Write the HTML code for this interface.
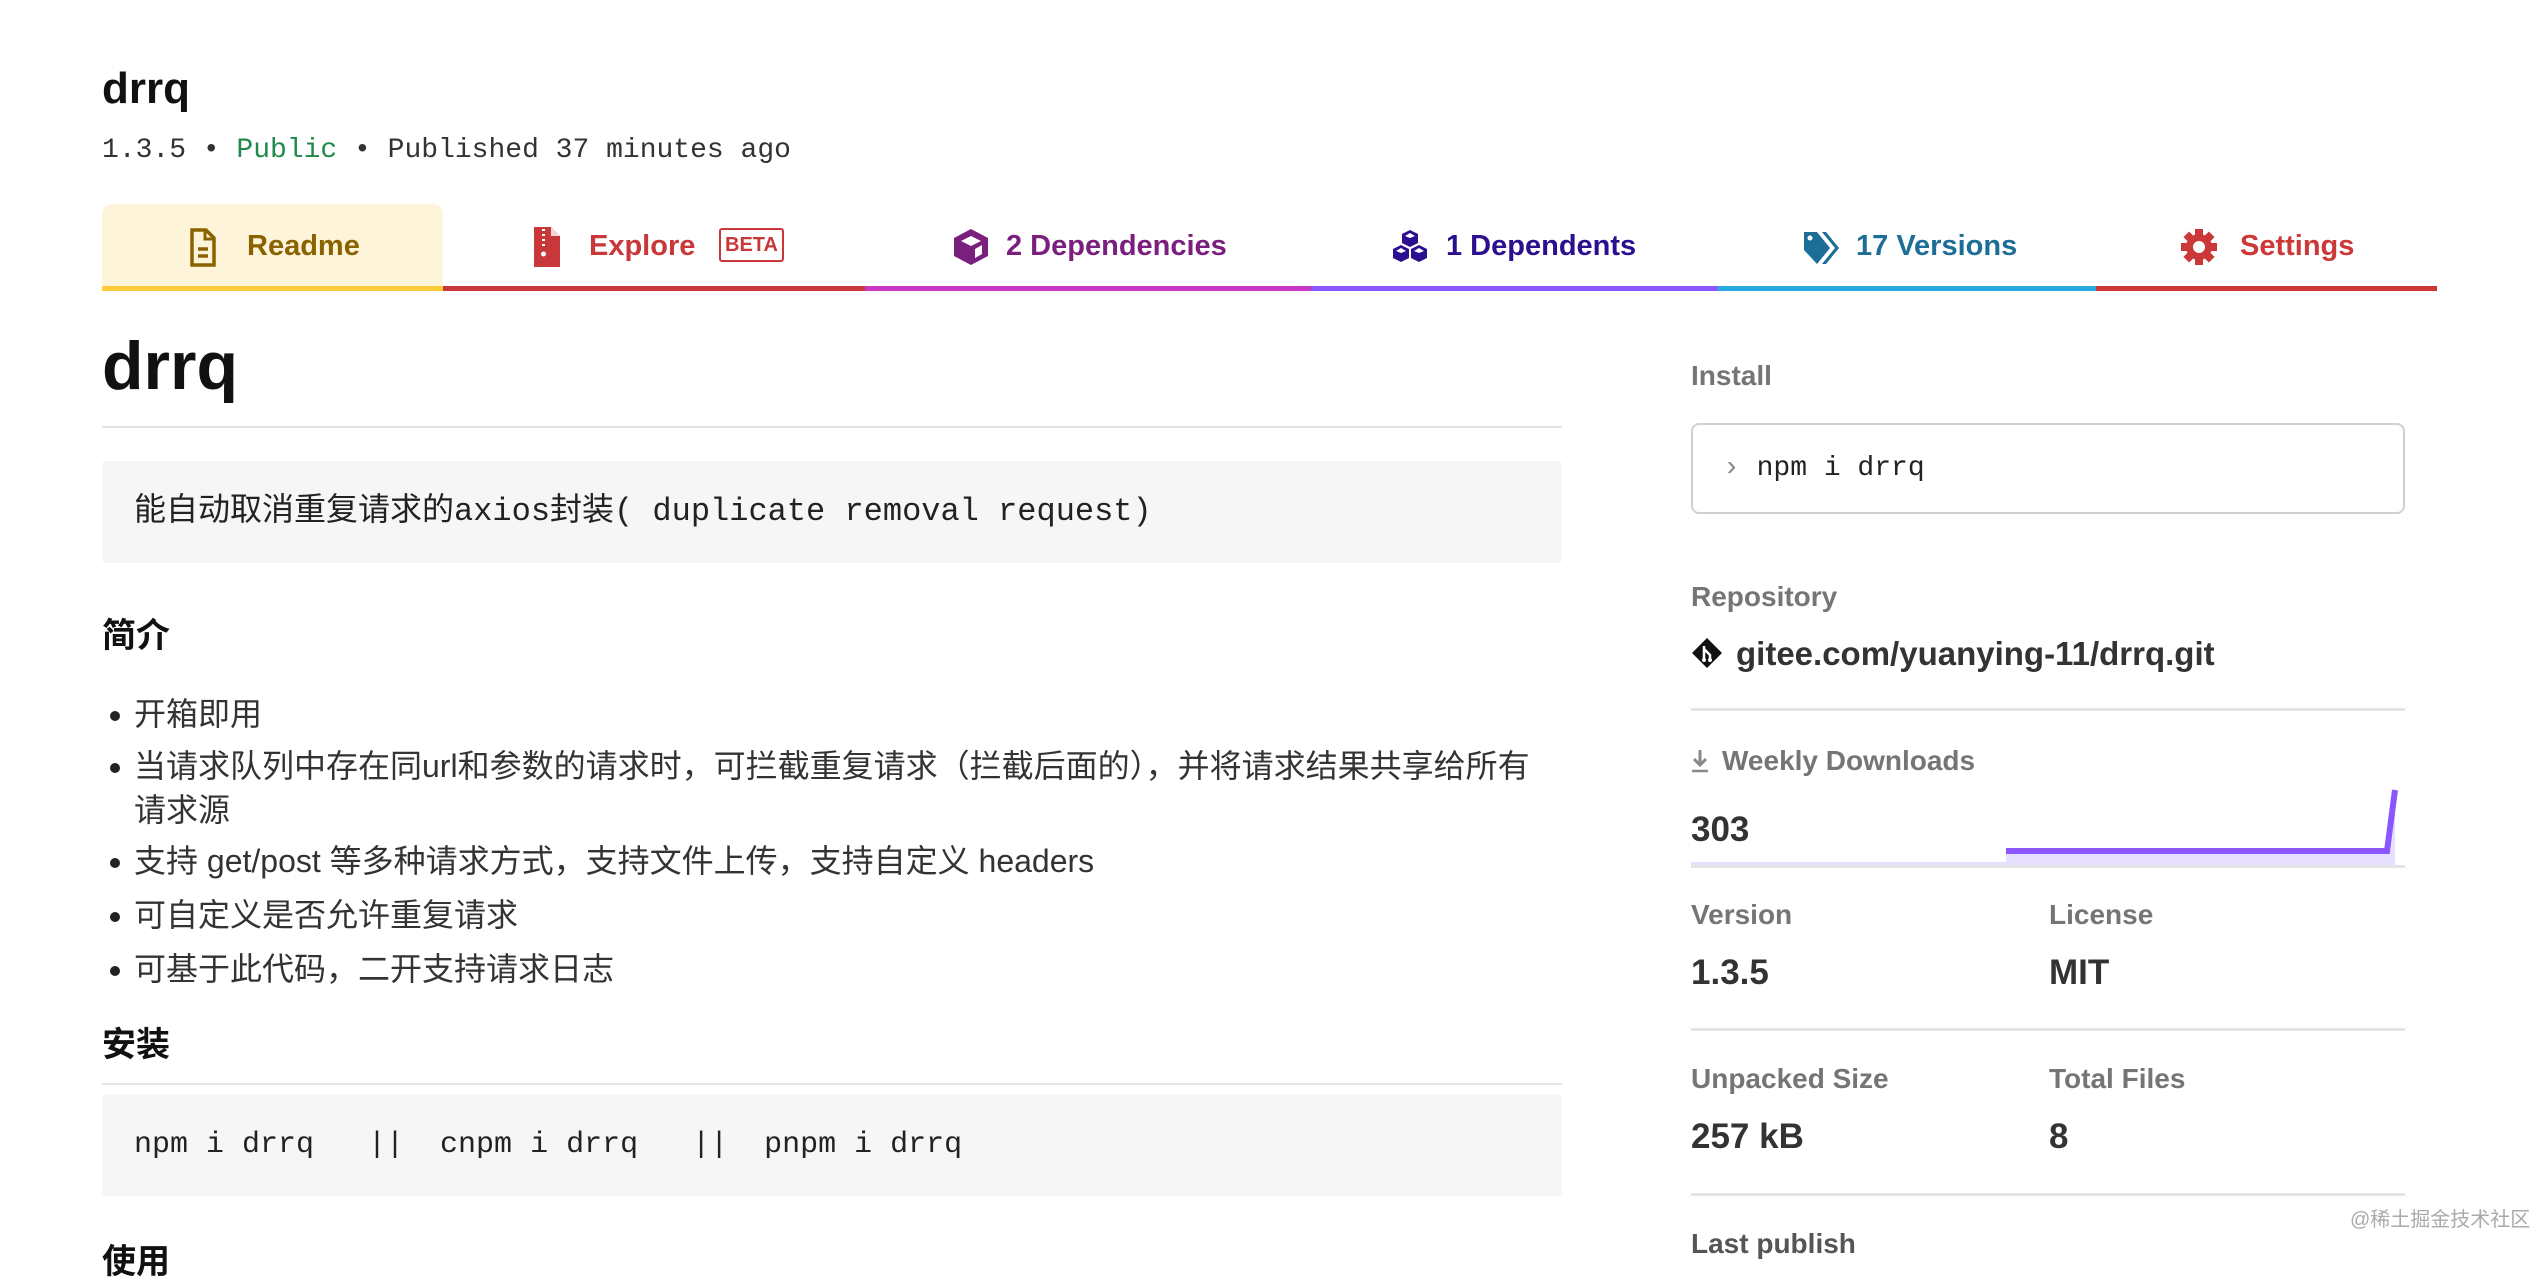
<!DOCTYPE html>
<html><head><meta charset="utf-8">
<style>
*{margin:0;padding:0;box-sizing:border-box}
body{width:2544px;height:1266px;background:#fff;position:relative;overflow:hidden;font-family:"Liberation Sans","Noto Sans CJK SC",sans-serif;color:#111}
.a{position:absolute;white-space:nowrap}
.mono{font-family:"Liberation Mono","Noto Sans CJK SC",monospace}
.hr{position:absolute;height:3px;background:#e4e4e4}
.lbl{color:#757575;font-size:28px;font-weight:bold}
.val{color:#333;font-size:35px;font-weight:bold}
.tab{position:absolute;top:204px;height:86px}
.tl{position:absolute;top:286px;height:5px}
.tt{position:absolute;top:228px;font-size:29px;font-weight:bold;line-height:36px}
li{position:absolute;list-style:none;font-size:32px;color:#333;line-height:44px;left:110px}
li:before{content:"";position:absolute;left:0;top:19px;width:10px;height:10px;border-radius:50%;background:#222}
li span{margin-left:24px;display:inline-block}
</style></head><body>

<div class="a" style="left:102px;top:62px;font-size:44px;font-weight:bold;line-height:54px">drrq</div>
<div class="a mono" style="left:102px;top:134px;font-size:28px;line-height:34px;color:#333">1.3.5 • <span style="color:#1f8a4c">Public</span> • Published 37 minutes ago</div>

<!-- tabs -->
<div class="tab" style="left:102px;width:341px;background:#fef4da;border-radius:10px 10px 0 0"></div>
<div class="tl" style="left:102px;width:341px;background:#ffcd3a"></div>
<div class="tl" style="left:443px;width:422px;background:#c8373a"></div>
<div class="tl" style="left:865px;width:446px;background:#c836c4"></div>
<div class="tl" style="left:1311px;width:407px;background:#8956ff"></div>
<div class="tl" style="left:1718px;width:378px;background:#29abe2"></div>
<div class="tl" style="left:2096px;width:341px;background:#cb3837"></div>

<svg class="a" style="left:189px;top:228px" width="28" height="40" viewBox="0 0 28 40"><path d="M3 2h14l8 8v27H3z" fill="none" stroke="#8a6300" stroke-width="3.5"/><path d="M16 2v9h9" fill="none" stroke="#8a6300" stroke-width="3"/><path d="M9 21h10M9 28h10" stroke="#8a6300" stroke-width="3.5"/></svg>
<div class="tt" style="left:247px;color:#8a6300">Readme</div>

<svg class="a" style="left:534px;top:227px" width="26" height="40" viewBox="0 0 26 40"><path d="M0 0h17l9 9v31H0z" fill="#c8373a"/><path d="M17 0v9h9" fill="#fff" opacity=".8"/><path d="M8 3h3M8 8h3M8 13h3M8 18h3" stroke="#fff" stroke-width="2"/><circle cx="9.5" cy="27" r="2.5" fill="#fff"/></svg>
<div class="tt" style="left:589px;color:#c8373a">Explore</div>
<div class="a" style="left:719px;top:228px;width:65px;height:34px;border:2px solid #c8373a;border-radius:3px;color:#c8373a;font-size:20px;font-weight:bold;text-align:center;line-height:30px">BETA</div>

<svg class="a" style="left:952px;top:228px" width="38" height="38" viewBox="0 0 38 38"><path d="M19 1L36 10V28L19 37L2 28V10Z" fill="#7a1f7e"/><path d="M19 8L29 13L19 18L9 13Z" fill="#fff"/><path d="M23 21L30 17V26L23 30Z" fill="#fff"/></svg>
<div class="tt" style="left:1006px;color:#7a1f7e">2 Dependencies</div>

<svg class="a" style="left:1391px;top:229px" width="38" height="38" viewBox="0 0 38 38"><g fill="#2b0f8f"><path d="M19 1L27 5V14L19 18L11 14V5Z"/><path d="M10 16L18 20V29L10 33L2 29V20Z"/><path d="M28 16L36 20V29L28 33L20 29V20Z"/></g><g fill="#fff"><path d="M19 4L24 7L19 9L14 7Z"/><path d="M10 19L15 22L10 24L5 22Z"/><path d="M28 19L33 22L28 24L23 22Z"/></g></svg>
<div class="tt" style="left:1446px;color:#2b0f8f">1 Dependents</div>

<svg class="a" style="left:1802px;top:230px" width="40" height="36" viewBox="0 0 40 36"><path d="M2 2h13l13 16-13 16L2 20Z" fill="#1d6e96"/><path d="M20 2h4l13 16-13 16h-4l13-16Z" fill="#1d6e96"/><circle cx="8" cy="8" r="2.5" fill="#fff"/></svg>
<div class="tt" style="left:1856px;color:#1d6e96">17 Versions</div>

<svg class="a" style="left:2180px;top:228px" width="38" height="38" viewBox="0 0 38 38"><g fill="#cb3837"><circle cx="19" cy="19" r="13"/><rect x="15" y="1" width="8" height="36"/><rect x="1" y="15" width="36" height="8"/><rect x="15" y="1" width="8" height="36" transform="rotate(45 19 19)"/><rect x="15" y="1" width="8" height="36" transform="rotate(-45 19 19)"/></g><circle cx="19" cy="19" r="6" fill="#fff"/></svg>
<div class="tt" style="left:2240px;color:#cb3837">Settings</div>

<!-- readme -->
<div class="a" style="left:102px;top:326px;font-size:68px;font-weight:bold;line-height:80px">drrq</div>
<div class="hr" style="left:102px;top:426px;width:1460px;height:2px"></div>
<div class="a" style="left:102px;top:461px;width:1460px;height:102px;background:#f6f6f6;border-radius:4px"></div>
<div class="a mono" style="left:134px;top:492px;font-size:32px;line-height:40px;color:#222">能自动取消重复请求的axios封装( duplicate removal request)</div>

<div class="a" style="left:102px;top:614px;font-size:34px;font-weight:bold;line-height:44px">简介</div>
<ul>
<li style="top:692px"><span>开箱即用</span></li>
<li style="top:744px"><span>当请求队列中存在同url和参数的请求时，可拦截重复请求（拦截后面的），并将请求结果共享给所有<br>请求源</span></li>
<li style="top:839px"><span>支持 get/post 等多种请求方式，支持文件上传，支持自定义 headers</span></li>
<li style="top:893px"><span>可自定义是否允许重复请求</span></li>
<li style="top:947px"><span>可基于此代码，二开支持请求日志</span></li>
</ul>
<div class="a" style="left:102px;top:1023px;font-size:34px;font-weight:bold;line-height:44px">安装</div>
<div class="hr" style="left:102px;top:1083px;width:1460px;height:2px"></div>
<div class="a" style="left:102px;top:1094px;width:1460px;height:102px;background:#f6f6f6;border-radius:4px"></div>
<div class="a mono" style="left:134px;top:1125px;font-size:30px;line-height:40px;color:#222;white-space:pre">npm i drrq   ||  cnpm i drrq   ||  pnpm i drrq</div>
<div class="a" style="left:102px;top:1240px;font-size:34px;font-weight:bold;line-height:44px">使用</div>

<!-- sidebar -->
<div class="a lbl" style="left:1691px;top:358px;line-height:36px">Install</div>
<div class="a" style="left:1691px;top:423px;width:714px;height:91px;border:2px solid #d0d0d0;border-radius:8px"></div>
<div class="a mono" style="left:1723px;top:451px;font-size:28px;line-height:36px;color:#222"><span style="color:#888">›</span> npm i drrq</div>
<div class="a lbl" style="left:1691px;top:579px;line-height:36px">Repository</div>
<svg class="a" style="left:1691px;top:637px" width="32" height="32" viewBox="0 0 32 32"><path d="M16 1L31 16L16 31L1 16Z" fill="#111"/><path d="M13 9v14M13 12l6 6v5" stroke="#fff" stroke-width="2.5" fill="none"/><circle cx="13" cy="23" r="2" fill="#fff"/><circle cx="19" cy="23" r="2" fill="#fff"/></svg>
<div class="a" style="left:1736px;top:633px;font-size:33px;font-weight:bold;color:#333;line-height:42px">gitee.com/yuanying-11/drrq.git</div>
<div class="hr" style="left:1691px;top:708px;width:714px"></div>

<svg class="a" style="left:1691px;top:748px" width="18" height="26" viewBox="0 0 18 26"><path d="M9 2v14M3 11l6 6 6-6" stroke="#888" stroke-width="3" fill="none"/><path d="M1 23h16" stroke="#888" stroke-width="2.5"/></svg>
<div class="a lbl" style="left:1722px;top:743px;line-height:36px">Weekly Downloads</div>
<div class="a val" style="left:1691px;top:809px;line-height:42px">303</div>
<svg class="a" style="left:1691px;top:780px" width="714" height="90" viewBox="0 0 714 90"><path d="M0 82H315V71H696L704 10V86H0Z" fill="#e6dffe"/><path d="M315 71H696L704 10" stroke="#8956ff" stroke-width="6" fill="none"/></svg>
<div class="hr" style="left:1691px;top:865px;width:714px"></div>

<div class="a lbl" style="left:1691px;top:897px;line-height:36px">Version</div>
<div class="a lbl" style="left:2049px;top:897px;line-height:36px">License</div>
<div class="a val" style="left:1691px;top:952px;line-height:42px">1.3.5</div>
<div class="a val" style="left:2049px;top:952px;line-height:42px">MIT</div>
<div class="hr" style="left:1691px;top:1028px;width:714px"></div>
<div class="a lbl" style="left:1691px;top:1061px;line-height:36px">Unpacked Size</div>
<div class="a lbl" style="left:2049px;top:1061px;line-height:36px">Total Files</div>
<div class="a val" style="left:1691px;top:1116px;line-height:42px">257 kB</div>
<div class="a val" style="left:2049px;top:1116px;line-height:42px">8</div>
<div class="hr" style="left:1691px;top:1193px;width:714px"></div>
<div class="a lbl" style="left:1691px;top:1226px;line-height:36px;color:#555">Last publish</div>
<div class="a" style="left:2350px;top:1203px;font-size:20px;color:#aaa">@稀土掘金技术社区</div>
</body></html>
